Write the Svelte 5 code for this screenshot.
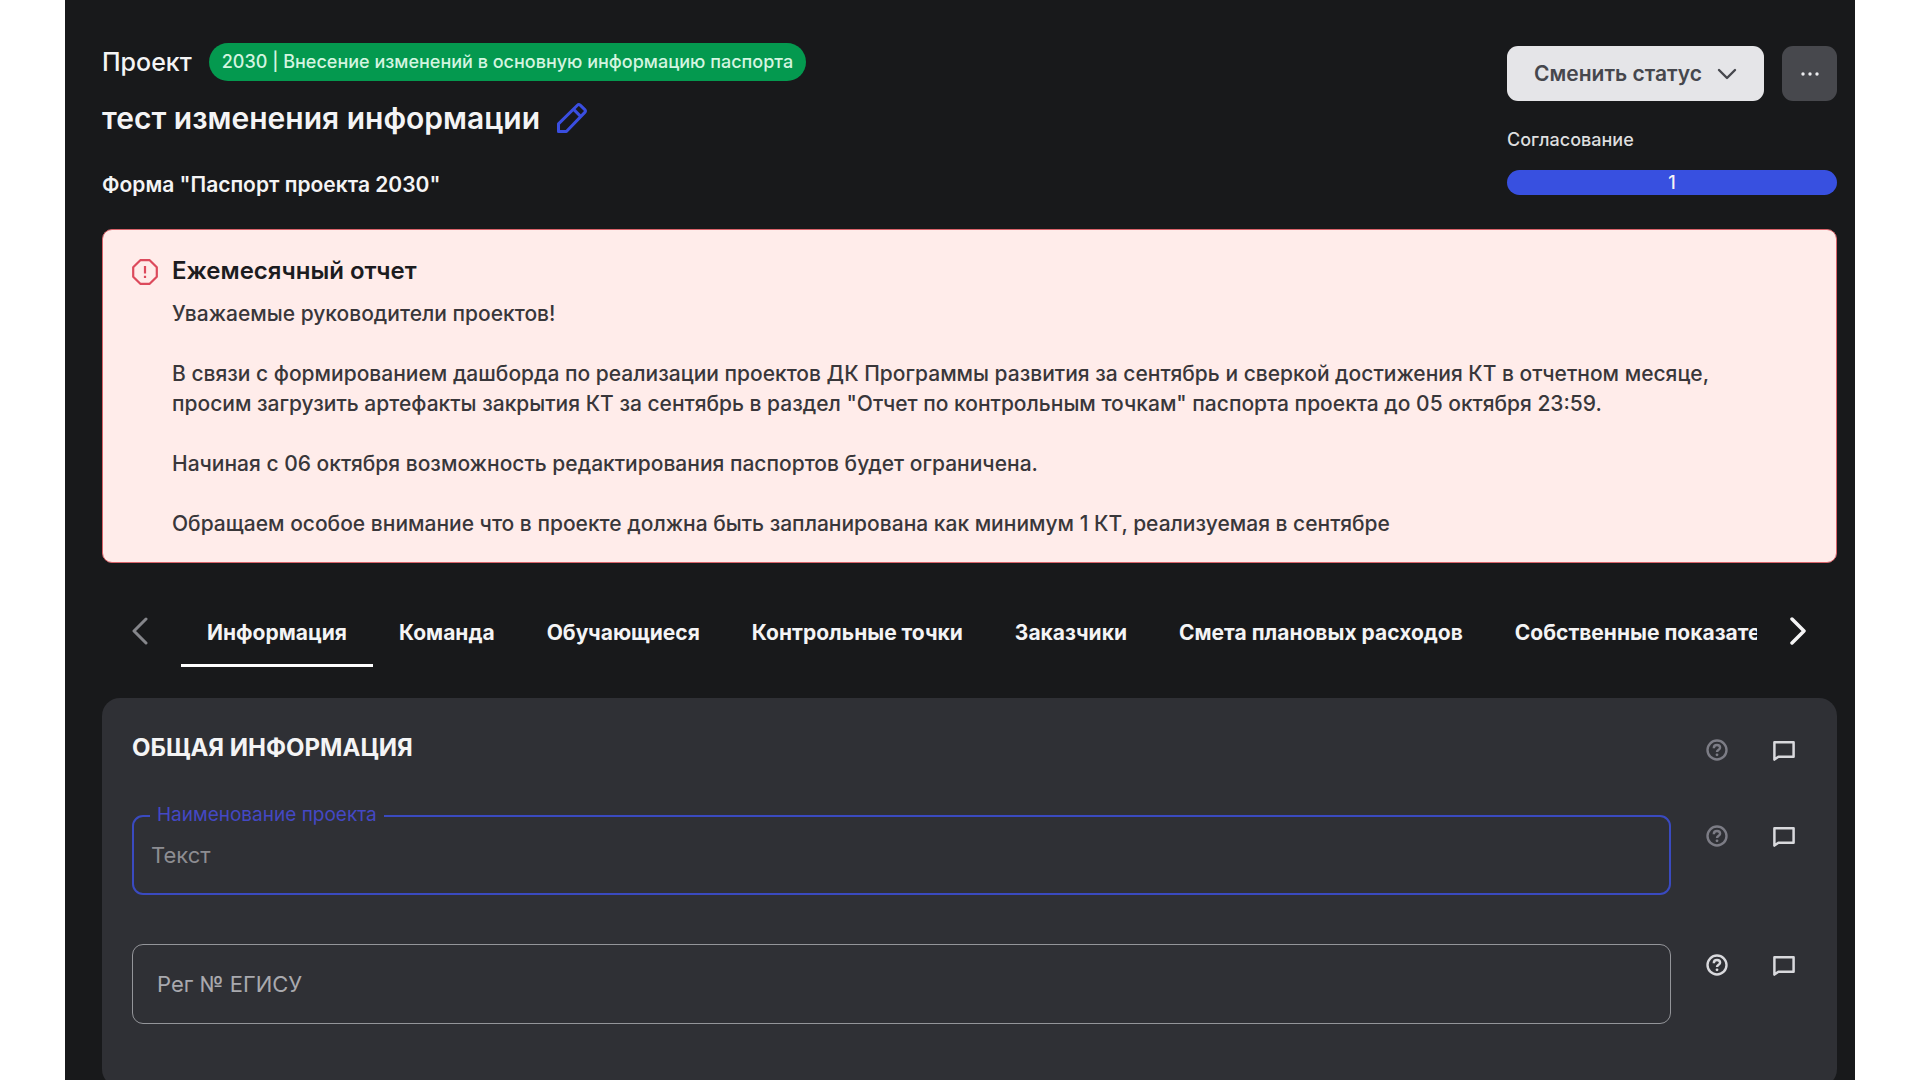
<script>
  const tabs = [
    'Информация',
    'Команда',
    'Обучающиеся',
    'Контрольные точки',
    'Заказчики',
    'Смета плановых расходов',
    'Собственные показатели',
  ];
  let active = $state(0);
  let projectName = $state('');
  let regNumber = $state('');
</script>

{#snippet rowActions(muted)}
  <div class="actions">
    <button class="icon-button" class:muted type="button" aria-label="Справка">
      <svg width="22" height="22" viewBox="0 0 22 22" fill="none" stroke="currentColor" stroke-width="2.4">
        <circle cx="11" cy="11" r="9.5" />
        <path d="M7.8 9.2C7.8 7.2 9.2 6 11 6s3.1 1 3.1 2.7c0 2-3.1 2.1-3.1 4.2" />
        <circle cx="11" cy="15.8" r="1.4" fill="currentColor" stroke="none" />
      </svg>
    </button>
    <button class="icon-button" type="button" aria-label="Комментарии">
      <svg width="22" height="22" viewBox="0 0 22 22" fill="none" stroke="currentColor" stroke-width="2.5" stroke-linejoin="round">
        <path d="M1.4 3.2h19.2v14.6H5.4L1.4 20.6z" />
      </svg>
    </button>
  </div>
{/snippet}

<main class="page">
  <header class="header">
    <div class="heading">
      <div class="kind">
        <span class="kind-name">Проект</span>
        <span class="badge">2030 | Внесение изменений в основную информацию паспорта</span>
      </div>
      <div class="title-row">
        <h1>тест изменения информации</h1>
        <button class="edit" type="button" aria-label="Изменить название">
          <svg width="32" height="32" viewBox="0 0 32 32" fill="none" stroke="currentColor" stroke-width="3" stroke-linejoin="round">
            <path d="M2.5 29.5v-7.6L21.4 3.2q1.4-1.4 2.8 0l4.6 4.4q1.4 1.4 0 2.8L10.4 29.5z" />
            <path d="M17.6 7.4l7 7" />
          </svg>
        </button>
      </div>
      <p class="form-name">Форма "Паспорт проекта 2030"</p>
    </div>
    <div class="status">
      <div class="status-buttons">
        <button class="change" type="button">
          Сменить статус
          <svg width="20" height="12" viewBox="0 0 20 12" fill="none" stroke="currentColor" stroke-width="2.4" stroke-linecap="round" stroke-linejoin="round">
            <path d="M2 2l8 8 8-8" />
          </svg>
        </button>
        <button class="more" type="button" aria-label="Ещё">
          <svg width="18" height="4" viewBox="0 0 18 4" fill="currentColor">
            <circle cx="2" cy="2" r="1.7" /><circle cx="9" cy="2" r="1.7" /><circle cx="16" cy="2" r="1.7" />
          </svg>
        </button>
      </div>
      <span class="stage">Согласование</span>
      <div class="progress">1</div>
    </div>
  </header>

  <section class="alert">
    <svg class="alert-icon" width="26" height="26" viewBox="0 0 26 26" fill="none" stroke="currentColor" stroke-width="2.2" stroke-linejoin="round">
      <path d="M8.3 1.2h9.4l7.1 7.1v9.4l-7.1 7.1H8.3l-7.1-7.1V8.3z" />
      <path d="M13 7v7.6M13 16.8v2.2" />
    </svg>
    <div class="alert-body">
      <h2>Ежемесячный отчет</h2>
      <p>Уважаемые руководители проектов!</p>
      <p>
        В связи с формированием дашборда по реализации проектов ДК Программы развития за сентябрь и сверкой достижения КТ в отчетном месяце,<br />
        просим загрузить артефакты закрытия КТ за сентябрь в раздел "Отчет по контрольным точкам" паспорта проекта до 05 октября 23:59.
      </p>
      <p>Начиная с 06 октября возможность редактирования паспортов будет ограничена.</p>
      <p>Обращаем особое внимание что в проекте должна быть запланирована как минимум 1 КТ, реализуемая в сентябре</p>
    </div>
  </section>

  <nav class="tabs">
    <button class="arrow prev" type="button" aria-label="Назад">
      <svg width="18" height="28" viewBox="0 0 18 28" fill="none" stroke="currentColor" stroke-width="3" stroke-linecap="round" stroke-linejoin="round">
        <path d="M15 2L3 14l12 12" />
      </svg>
    </button>
    <div class="tab-list" role="tablist">
      {#each tabs as tab, i}
        <button class="tab" class:active={active === i} type="button" role="tab" aria-selected={active === i} onclick={() => (active = i)}>{tab}</button>
      {/each}
    </div>
    <button class="arrow" type="button" aria-label="Вперёд">
      <svg width="18" height="28" viewBox="0 0 18 28" fill="none" stroke="currentColor" stroke-width="3.5" stroke-linecap="round" stroke-linejoin="round">
        <path d="M3 2l12 12L3 26" />
      </svg>
    </button>
  </nav>

  <section class="card">
    <div class="row card-head">
      <h2>ОБЩАЯ ИНФОРМАЦИЯ</h2>
      {@render rowActions(true)}
    </div>
    <div class="row">
      <div class="field focused">
        <label for="project-name">Наименование проекта</label>
        <input id="project-name" type="text" placeholder="Текст" bind:value={projectName} />
      </div>
      {@render rowActions(true)}
    </div>
    <div class="row">
      <div class="field">
        <input id="reg-number" type="text" placeholder="Рег № ЕГИСУ" aria-label="Рег № ЕГИСУ" bind:value={regNumber} />
      </div>
      {@render rowActions(false)}
    </div>
  </section>
</main>

<style>
  :global(body) {
    background: #fff;
  }
  .page {
    box-sizing: border-box;
    height: 100vh;
    overflow: hidden;
    margin: 0 65px;
    padding: 43px 18px 0 37px;
    background: #18191b;
    color: #f4f4f5;
    font-family: Inter, 'Liberation Sans', sans-serif;
    font-size: 21px;
    font-weight: 500;
    line-height: 30px;
  }
  h1, h2, p {
    margin: 0;
    font-weight: 500;
  }
  button, input {
    font: inherit;
    color: inherit;
  }
  button {
    padding: 0;
    border: 0;
    background: none;
    cursor: pointer;
  }
  svg {
    display: block;
    flex: none;
  }

  .header {
    display: flex;
    justify-content: space-between;
    align-items: flex-start;
    height: 186px;
  }
  .kind {
    display: flex;
    align-items: center;
    gap: 17px;
  }
  .kind-name {
    font-size: 25px;
  }
  .badge {
    padding: 0 13px;
    border-radius: 19px;
    background: #04994f;
    color: #d4f5e0;
    font-size: 18px;
    line-height: 38px;
  }
  .title-row {
    display: flex;
    align-items: center;
    gap: 16px;
    margin-top: 17px;
  }
  h1 {
    font-size: 30px;
    font-weight: 600;
    line-height: 40px;
  }
  .edit {
    color: #3a4ee0;
  }
  .form-name {
    margin-top: 32px;
    font-weight: 600;
  }

  .status {
    display: flex;
    flex-direction: column;
    width: 330px;
    padding-top: 3px;
  }
  .status-buttons {
    display: flex;
    justify-content: flex-end;
    gap: 18px;
  }
  .change,
  .more {
    display: flex;
    align-items: center;
    justify-content: center;
    height: 55px;
    border-radius: 11px;
  }
  .change {
    gap: 15px;
    flex: 1;
    background: #e5e5e8;
    color: #46474d;
    font-weight: 600;
  }
  .more {
    width: 55px;
    background: #47484d;
    color: #ececef;
  }
  .stage {
    margin-top: 24px;
    color: #dededf;
    font-size: 18px;
  }
  .progress {
    margin-top: 15px;
    border-radius: 13px;
    background: #3850e0;
    font-size: 18px;
    line-height: 25px;
    text-align: center;
  }

  .alert {
    display: flex;
    gap: 14px;
    padding: 27px 28px 23px 29px;
    border: 1px solid #d9636a;
    border-radius: 10px;
    background: #ffecea;
    color: #39373a;
  }
  .alert-icon {
    margin-top: 2px;
    color: #dc4a5c;
  }
  .alert h2 {
    color: #1c1c1f;
    font-size: 24px;
    font-weight: 600;
    line-height: 28px;
    margin-bottom: 14px;
  }
  .alert p + p {
    margin-top: 30px;
  }

  .tabs {
    display: flex;
    align-items: center;
    margin: 36px 30px 31px 29px;
    gap: 32px;
  }
  .arrow {
    color: #f4f4f5;
  }
  .arrow svg {
    margin-bottom: 4px;
  }
  .prev {
    color: #85868b;
  }
  .tab-list {
    display: flex;
    flex: 1;
    min-width: 0;
    overflow: hidden;
  }
  .tab {
    flex: none;
    padding: 19px 26px 16px;
    border-bottom: 3px solid transparent;
    font-weight: 700;
    white-space: nowrap;
  }
  .tab.active {
    border-color: #fff;
  }

  .card {
    padding: 31px 30px 63px;
    border-radius: 18px;
    background: #2f3035;
  }
  .row {
    display: flex;
    align-items: flex-start;
    gap: 35px;
    margin-top: 49px;
  }
  .card-head {
    margin: 0 0 48px;
  }
  .card-head + .row {
    margin-top: 0;
  }
  .card-head h2 {
    flex: 1;
    font-size: 24px;
    font-weight: 700;
    line-height: 38px;
  }
  .actions {
    display: flex;
    gap: 45px;
    padding: 10px 12px 0 0;
  }
  .icon-button {
    color: #d9d9dd;
  }
  .icon-button.muted {
    color: #7c7c85;
  }
  .field {
    position: relative;
    flex: 1;
  }
  .field input {
    box-sizing: border-box;
    display: block;
    width: 100%;
    height: 80px;
    padding: 0 24px;
    border: 1px solid #94959a;
    border-radius: 11px;
    outline: none;
    background: transparent;
    font-size: 22px;
    font-weight: 400;
  }
  .field input::placeholder {
    color: #a9a9ae;
    opacity: 1;
  }
  .focused input {
    padding: 0 17px;
    border: 2px solid #3a4ac0;
  }
  .focused input::placeholder {
    color: #8d8d92;
  }
  .field label {
    position: absolute;
    top: -15px;
    left: 18px;
    padding: 0 7px;
    background: #2f3035;
    color: #4448c4;
    font-size: 19px;
    font-weight: 400;
  }
</style>
